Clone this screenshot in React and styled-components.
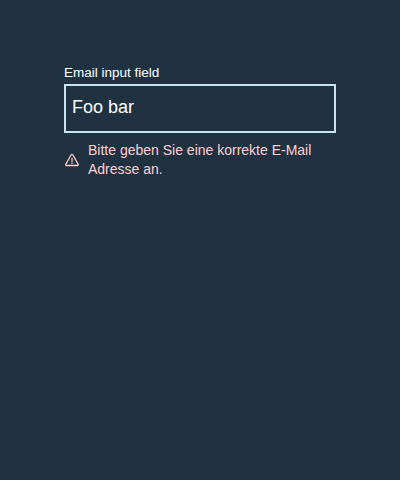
import React from "react";
import styled, { createGlobalStyle } from "styled-components";

const GlobalStyle = createGlobalStyle`
  *, *::before, *::after { box-sizing: border-box; }
  body { margin: 0; background: #203242; }
`;

const Page = styled.main`
  min-height: 480px;
  padding: 64px;
  background: #203242;
  font-family: "Liberation Sans", Arial, sans-serif;
`;

const Field = styled.div`
  display: flex;
  flex-direction: column;
`;

const Label = styled.label`
  height: 20px;
  font-size: 13.5px;
  line-height: 17px;
  color: #fff;
`;

const Input = styled.input`
  width: 100%;
  height: 49px;
  margin: 0;
  padding: 0 6px 3px;
  border: 2px solid #c9e3f3;
  border-radius: 0;
  outline: none;
  background: #203242;
  color: #fff;
  font-family: inherit;
  font-size: 18px;
`;

const ErrorMessage = styled.div`
  display: flex;
  align-items: center;
  gap: 8px;
  margin-top: 8px;
  color: #ffcfcf;
  font-size: 14px;
  line-height: 19px;
`;

const WarningIcon = styled.svg`
  flex: none;
  width: 16px;
  height: 16px;
`;

export default function App() {
  return (
    <>
      <GlobalStyle />
      <Page>
        <Field>
          <Label htmlFor="email">Email input field</Label>
          <Input id="email" type="text" defaultValue="Foo bar" aria-invalid="true" aria-describedby="email-error" />
          <ErrorMessage id="email-error">
            <WarningIcon viewBox="0 0 16 16" fill="none" stroke="currentColor" strokeLinejoin="round" aria-hidden="true">
              <path d="M7.2 2.8 1.8 12.3a.8.8 0 0 0 .8 1.2h10.8a.8.8 0 0 0 .8-1.2L8.8 2.8a.9.9 0 0 0-1.6 0Z" strokeWidth="1.3" />
              <path d="M8 6v4M8 10.6v1.3" strokeWidth="1.2" />
            </WarningIcon>
            <span>Bitte geben Sie eine korrekte E-Mail Adresse an.</span>
          </ErrorMessage>
        </Field>
      </Page>
    </>
  );
}
